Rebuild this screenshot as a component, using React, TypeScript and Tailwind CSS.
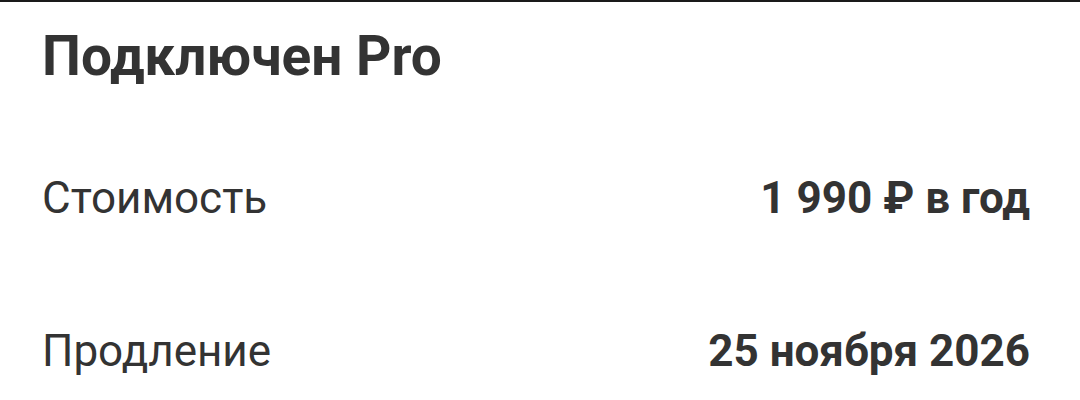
export default function App() {
  return (
    <div className="w-[1080px] h-[400px] bg-white border-t-2 border-[#1a1a1a] overflow-hidden font-['Roboto',sans-serif] text-[#333333]">
      <div className="pl-[42px] pr-[50px]">
        <h1 className="text-[55px] font-bold leading-none pt-[27px]">Подключен Pro</h1>
        <div className="flex justify-between items-baseline mt-[92px] text-[44px] leading-none">
          <span>Стоимость</span>
          <span className="font-bold">1 990 ₽ в год</span>
        </div>
        <div className="flex justify-between items-baseline mt-[109px] text-[44px] leading-none">
          <span>Продление</span>
          <span className="font-bold">25 ноября 2026</span>
        </div>
      </div>
    </div>
  );
}
